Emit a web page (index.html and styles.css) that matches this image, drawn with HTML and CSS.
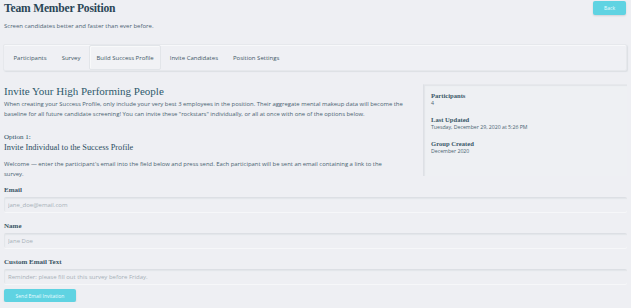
FILE: index.html
```html
<!DOCTYPE html>
<html lang="en">
<head>
    <meta charset="UTF-8">
    <meta name="viewport" content="width=device-width, initial-scale=1.0">
    <title>Team Member Position</title>
    <link rel="stylesheet" href="styles.css">
</head>
<body>
    <div class="page-head">
        <div>
            <h1>Team Member Position</h1>
            <p class="subtitle">Screen candidates better and faster than ever before.</p>
        </div>
        <button class="btn back-btn">Back</button>
    </div>

    <nav class="tabs">
        <a class="tab">Participants</a>
        <a class="tab">Survey</a>
        <a class="tab active">Build Success Profile</a>
        <a class="tab">Invite Candidates</a>
        <a class="tab">Position Settings</a>
    </nav>

    <div class="content">
        <div class="main-col">
            <h2>Invite Your High Performing People</h2>
            <p class="text">When creating your Success Profile, only include your very best 3 employees in the position. Their aggregate mental makeup data will become the baseline for all future candidate screening! You can invite these "rockstars" individually, or all at once with one of the options below.</p>
            <div class="option-label">Option 1:</div>
            <h3>Invite Individual to the Success Profile</h3>
            <p class="text welcome">Welcome — enter the participant's email into the field below and press send. Each participant will be sent an email containing a link to the survey.</p>
        </div>
        <aside class="info-card">
            <div class="info-item">
                <div class="info-title">Participants</div>
                <div class="info-value">4</div>
            </div>
            <div class="info-item">
                <div class="info-title">Last Updated</div>
                <div class="info-value">Tuesday, December 29, 2020 at 5:26 PM</div>
            </div>
            <div class="info-item">
                <div class="info-title">Group Created</div>
                <div class="info-value">December 2020</div>
            </div>
        </aside>
    </div>

    <form class="invite-form">
        <div class="form-group">
            <label for="email">Email</label>
            <input type="text" id="email" placeholder="jane_doe@email.com">
        </div>
        <div class="form-group">
            <label for="name">Name</label>
            <input type="text" id="name" placeholder="Jane Doe">
        </div>
        <div class="form-group">
            <label for="custom">Custom Email Text</label>
            <input type="text" id="custom" placeholder="Reminder: please fill out this survey before Friday.">
        </div>
        <button type="submit" class="btn send-btn">Send Email Invitation</button>
    </form>
</body>
</html>
```

FILE: styles.css
```css
body {
    margin: 0;
    padding: 1px 4px 0 4px;
    background-color: #eeeff3;
    font-family: "Open Sans", "Liberation Sans", sans-serif;
    color: #3f5866;
}
h1, h2, h3, label, .option-label, .info-title {
    font-family: "Liberation Serif", "DejaVu Serif", serif;
    color: #2b4d5e;
}
.page-head {
    display: flex;
    justify-content: space-between;
    align-items: flex-start;
}
h1 {
    margin: 0;
    font-size: 11.6px;
    line-height: 16px;
    letter-spacing: -0.2px;
    font-weight: bold;
    color: #2a4656;
}
.subtitle {
    margin: 5px 0 0 0;
    font-size: 6px;
    line-height: 9px;
    color: #4c6473;
}
.btn {
    background-color: #5fd3e2;
    color: #eafcff;
    border: none;
    border-radius: 2px;
    font-family: "Open Sans", sans-serif;
    box-shadow: 0 1px 2px rgba(0,0,0,0.12);
    cursor: pointer;
}
.back-btn {
    width: 33px;
    height: 14px;
    margin-right: 1px;
    font-size: 5px;
    padding: 0;
}
.tabs {
    display: flex;
    align-items: stretch;
    margin: 13px 0 0 -1px;
    height: 27px;
    box-sizing: border-box;
    padding-left: 2px;
    background: #eff0f4;
    border: 1px solid #e6e8ec;
    border-radius: 2px;
    box-shadow: 1px 1px 1px #dcdfe4, inset 0 1px 0 #f7f8fa;
}
.tab {
    display: flex;
    align-items: center;
    padding: 0 7.5px;
    font-size: 6px;
    color: #3f5866;
}
.tab.active {
    margin: 0 1px;
    padding: 0 6.5px;
    background: #f1f2f5;
    border: 1px solid #e2e5e9;
    border-radius: 2px;
    box-shadow: inset 1px 1px 0 #f8f9fa;
}
.content {
    display: grid;
    grid-template-columns: 1fr 204px;
    gap: 15px;
    margin-top: 13px;
}
h2 {
    margin: 0;
    font-size: 11px;
    line-height: 14px;
    font-weight: normal;
    color: #2e5a6c;
}
.text {
    margin: 1px 0 0 0;
    font-size: 5.9px;
    line-height: 10px;
    color: #4a6371;
}
.option-label {
    margin-top: 13px;
    font-size: 7px;
    line-height: 10px;
}
h3 {
    margin: 0;
    font-size: 8.3px;
    line-height: 11px;
    font-weight: normal;
}
.text.welcome {
    margin-top: 6px;
    padding-right: 14px;
}
.info-card {
    height: 92px;
    box-sizing: border-box;
    padding: 6px 7px;
    background: #eef0f3;
    border-left: 1px solid #dde0e5;
    border-top: 1px solid #e6e8ec;
    box-shadow: inset 1px 1px 1px #e1e4e8;
}
.info-item {
    margin-bottom: 8px;
}
.info-title {
    font-size: 6.6px;
    line-height: 9px;
    font-weight: bold;
    color: #3a5868;
}
.info-value {
    font-size: 5.2px;
    line-height: 7px;
    color: #4a6371;
}
.invite-form {
    margin-top: 6px;
}
.form-group {
    margin-bottom: 9px;
}
label {
    display: block;
    margin-bottom: 2px;
    font-size: 7px;
    line-height: 10px;
    font-weight: bold;
    color: #3a5565;
}
input {
    display: block;
    width: 100%;
    height: 15px;
    box-sizing: border-box;
    padding: 0 4px;
    font-family: "Open Sans", sans-serif;
    font-size: 6px;
    background: #eeeff3;
    border: none;
    border-top: 1px solid #dcdfe4;
    border-radius: 2px;
    box-shadow: inset 1px 1px 1px #e2e5e9, 0 1px 0 #f6f7f9;
    outline: none;
}
input::placeholder {
    color: #a7b0b8;
}
.send-btn {
    display: block;
    margin-top: -4px;
    width: 72px;
    height: 13px;
    font-size: 5px;
    padding: 0;
}
```
